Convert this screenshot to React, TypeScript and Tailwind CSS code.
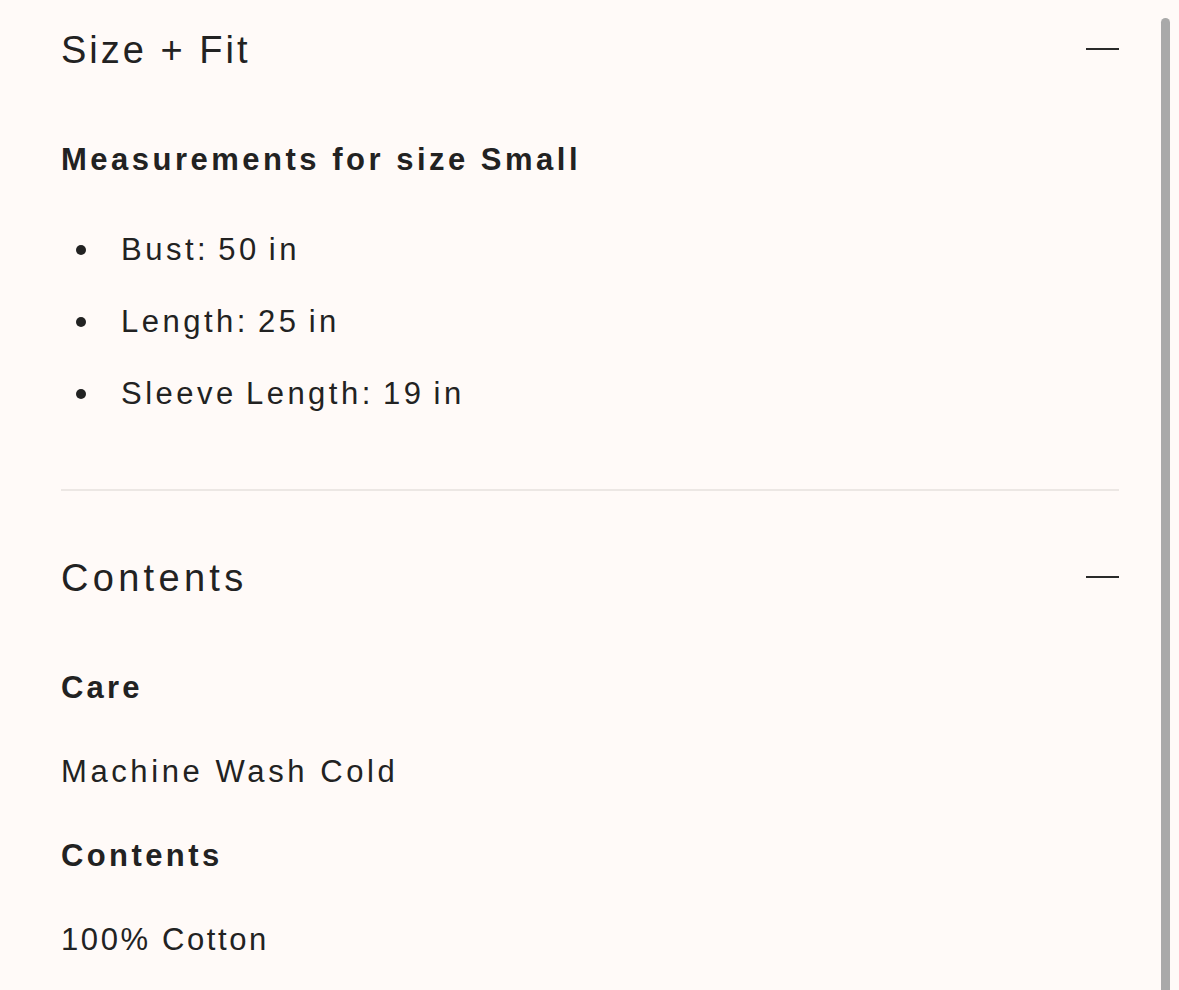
import React from "react";

const Minus = () => <div className="w-[33px] h-[2px] bg-[#2a2a2a] mb-[3px]" />;

const Bullet = ({ children }: { children: React.ReactNode }) => (
  <li className="flex items-center h-[40px]">
    <span className="w-[10px] h-[10px] rounded-full bg-[#222] ml-[15px] mr-[35px]" />
    <span className="text-[31px] leading-[40px] tracking-[3.5px] [word-spacing:-3px]">{children}</span>
  </li>
);

export default function App() {
  return (
    <div
      className="relative min-h-[990px] bg-[#fffaf8] text-[#222] overflow-hidden"
      style={{ fontFamily: '"Liberation Sans", Arial, sans-serif' }}
    >
      <div className="pl-[61px] pr-[60px] pt-[26px]">
        <div className="flex items-center justify-between h-[48px]">
          <h2 className="text-[38px] leading-[48px] tracking-[3px] font-normal">Size + Fit</h2>
          <Minus />
        </div>
        <h3 className="mt-[66px] text-[31px] leading-[40px] tracking-[3.5px] font-bold">
          Measurements for size Small
        </h3>
        <ul className="mt-[50px] flex flex-col gap-[32px]">
          <Bullet>Bust: 50 in</Bullet>
          <Bullet>Length: 25 in</Bullet>
          <Bullet>Sleeve Length: 19 in</Bullet>
        </ul>
        <div className="mt-[75px] h-[2px] bg-[#ece7e4]" />
        <div className="mt-[63px] flex items-center justify-between h-[48px]">
          <h2 className="text-[38px] leading-[48px] tracking-[4.3px] font-normal">Contents</h2>
          <Minus />
        </div>
        <h3 className="mt-[66px] text-[31px] leading-[40px] tracking-[3.2px] font-bold">Care</h3>
        <p className="mt-[44px] text-[31px] leading-[40px] tracking-[3.6px]">Machine Wash Cold</p>
        <h3 className="mt-[44px] text-[31px] leading-[40px] tracking-[3.4px] font-bold">Contents</h3>
        <p className="mt-[44px] text-[31px] leading-[40px] tracking-[2.6px]">100% Cotton</p>
      </div>
      <div className="absolute left-[1161px] top-[18px] w-[9px] h-[1000px] rounded-full bg-[#a9a9a9]" />
    </div>
  );
}
